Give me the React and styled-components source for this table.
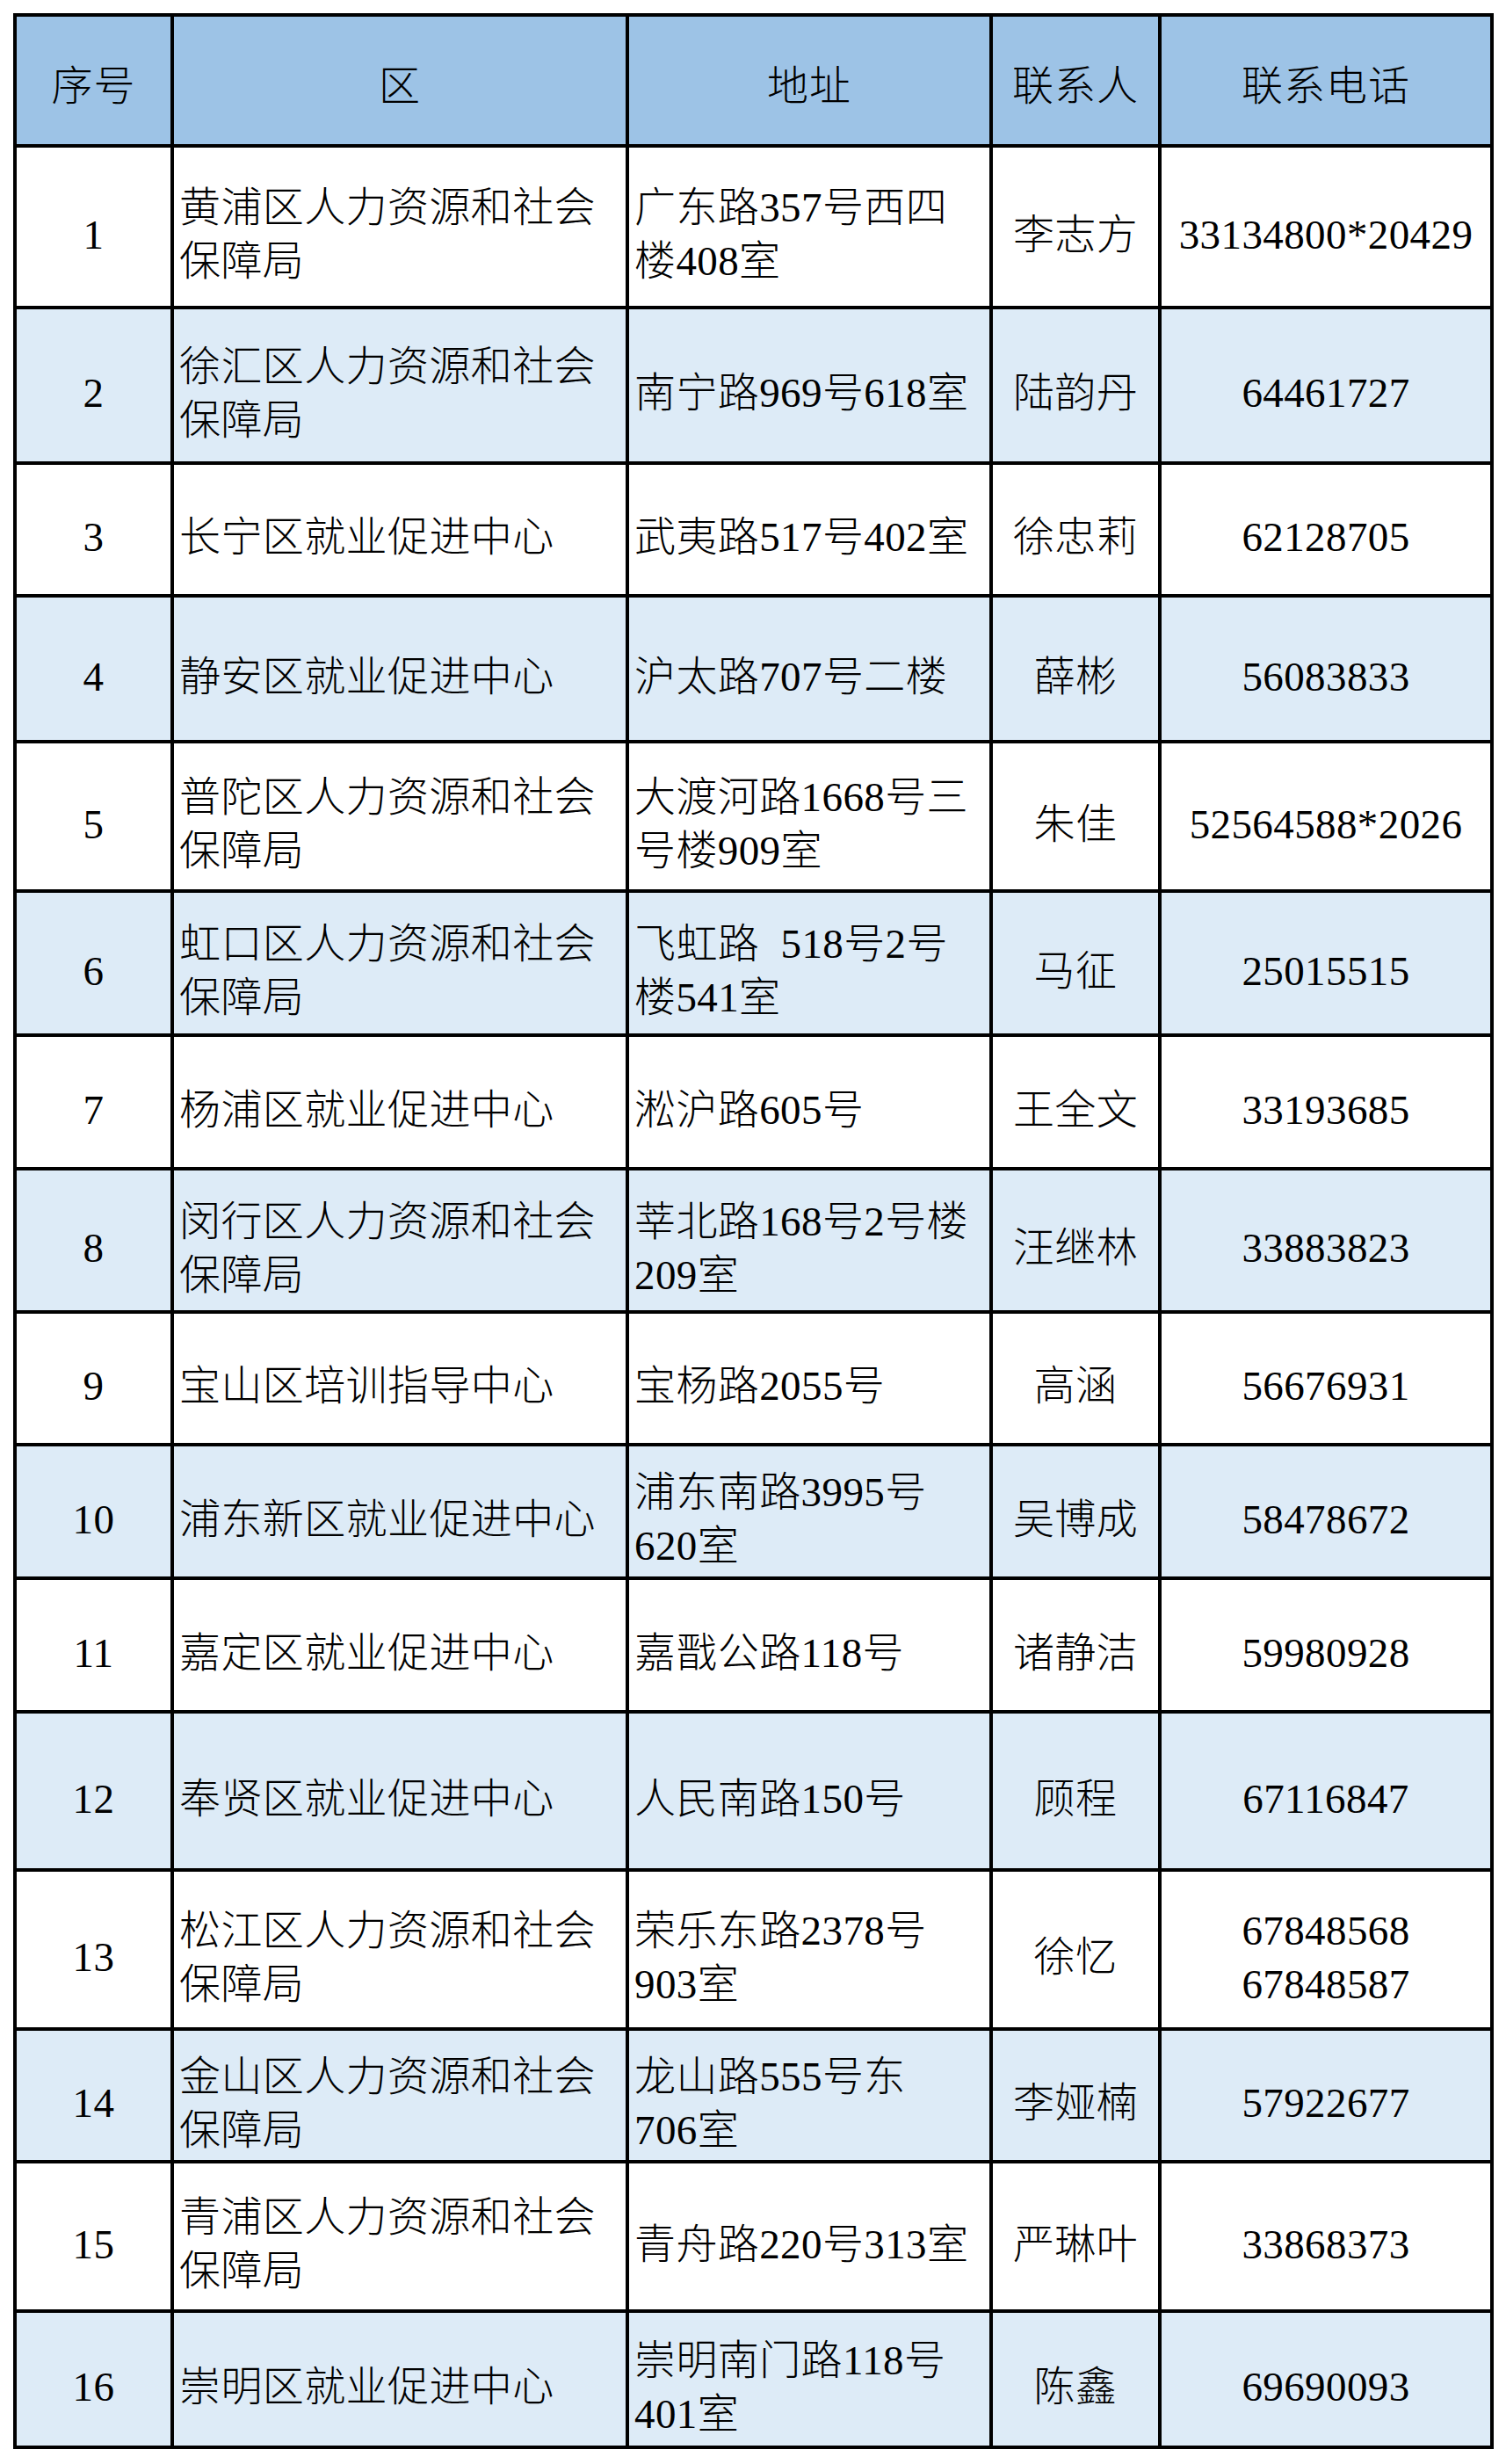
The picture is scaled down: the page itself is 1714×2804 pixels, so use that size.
import styled, { createGlobalStyle } from "styled-components";

const GlobalStyle = createGlobalStyle`
  html, body {
    margin: 0;
    padding: 0;
    background: #ffffff;
  }
  body {
    font-family: "Liberation Serif", "Noto Sans CJK SC", serif;
    color: #000;
  }
`;

const Page = styled.div`
  padding: 15px 0 0 15px;
  width: 1714px;
  box-sizing: border-box;
`;

const Table = styled.table`
  border-collapse: collapse;
  table-layout: fixed;
  width: 1681px;
  border: 4px solid #000;
  font-family: "Liberation Serif", "Noto Sans CJK SC", serif;
  font-size: 47px;
  font-weight: 300;
  line-height: 61px;
`;

const HeadRow = styled.tr`
  height: 149px;
  background: #9dc3e6;
`;

const HeadCell = styled.th`
  border: 4px solid #000;
  font-weight: 300;
  text-align: center;
  vertical-align: middle;
  padding: 14px 0 0;
  letter-spacing: 1px;
`;

const Row = styled.tr`
  background: ${(p) => (p.$shade ? "#ddebf7" : "#ffffff")};
`;

const Cell = styled.td`
  border: 4px solid #000;
  text-align: ${(p) => p.$align || "left"};
  vertical-align: middle;
  padding: ${(p) => (p.$align === "center" ? "18px 0 0" : "18px 0 0 6px")};
  letter-spacing: 0.4px;
  overflow: hidden;
`;

const Line = styled.div`
  white-space: pre;
`;

const columns = [
  { title: "序号", width: 179 },
  { title: "区", width: 518 },
  { title: "地址", width: 414 },
  { title: "联系人", width: 192 },
  { title: "联系电话", width: 378 },
];

const rows = [
  { h: 184, area: ["黄浦区人力资源和社会", "保障局"], addr: ["广东路357号西四", "楼408室"], name: "李志方", tel: ["33134800*20429"] },
  { h: 177, area: ["徐汇区人力资源和社会", "保障局"], addr: ["南宁路969号618室"], name: "陆韵丹", tel: ["64461727"] },
  { h: 151, area: ["长宁区就业促进中心"], addr: ["武夷路517号402室"], name: "徐忠莉", tel: ["62128705"] },
  { h: 166, area: ["静安区就业促进中心"], addr: ["沪太路707号二楼"], name: "薛彬", tel: ["56083833"] },
  { h: 170, area: ["普陀区人力资源和社会", "保障局"], addr: ["大渡河路1668号三", "号楼909室"], name: "朱佳", tel: ["52564588*2026"] },
  { h: 164, area: ["虹口区人力资源和社会", "保障局"], addr: ["飞虹路  518号2号", "楼541室"], name: "马征", tel: ["25015515"] },
  { h: 152, area: ["杨浦区就业促进中心"], addr: ["淞沪路605号"], name: "王全文", tel: ["33193685"] },
  { h: 163, area: ["闵行区人力资源和社会", "保障局"], addr: ["莘北路168号2号楼", "209室"], name: "汪继林", tel: ["33883823"] },
  { h: 151, area: ["宝山区培训指导中心"], addr: ["宝杨路2055号"], name: "高涵", tel: ["56676931"] },
  { h: 152, area: ["浦东新区就业促进中心"], addr: ["浦东南路3995号", "620室"], name: "吴博成", tel: ["58478672"] },
  { h: 152, area: ["嘉定区就业促进中心"], addr: ["嘉戬公路118号"], name: "诸静洁", tel: ["59980928"] },
  { h: 180, area: ["奉贤区就业促进中心"], addr: ["人民南路150号"], name: "顾程", tel: ["67116847"] },
  { h: 181, area: ["松江区人力资源和社会", "保障局"], addr: ["荣乐东路2378号", "903室"], name: "徐忆", tel: ["67848568", "67848587"] },
  { h: 151, area: ["金山区人力资源和社会", "保障局"], addr: ["龙山路555号东", "706室"], name: "李娅楠", tel: ["57922677"] },
  { h: 170, area: ["青浦区人力资源和社会", "保障局"], addr: ["青舟路220号313室"], name: "严琳叶", tel: ["33868373"] },
  { h: 155, area: ["崇明区就业促进中心"], addr: ["崇明南门路118号", "401室"], name: "陈鑫", tel: ["69690093"] },
];

const Lines = ({ items }) =>
  items.map((t) => <Line key={t}>{t}</Line>);

const App = () => {
  return (
    <Page>
      <GlobalStyle />
      <Table>
        <colgroup>
          {columns.map((c) => (
            <col key={c.title} style={{ width: c.width }} />
          ))}
        </colgroup>
        <thead>
          <HeadRow>
            {columns.map((c) => (
              <HeadCell key={c.title}>{c.title}</HeadCell>
            ))}
          </HeadRow>
        </thead>
        <tbody>
          {rows.map((r, i) => (
            <Row key={i} $shade={i % 2 === 1} style={{ height: r.h }}>
              <Cell $align="center">{i + 1}</Cell>
              <Cell>
                <Lines items={r.area} />
              </Cell>
              <Cell>
                <Lines items={r.addr} />
              </Cell>
              <Cell $align="center">{r.name}</Cell>
              <Cell $align="center">
                <Lines items={r.tel} />
              </Cell>
            </Row>
          ))}
        </tbody>
      </Table>
    </Page>
  );
};

export default App;
